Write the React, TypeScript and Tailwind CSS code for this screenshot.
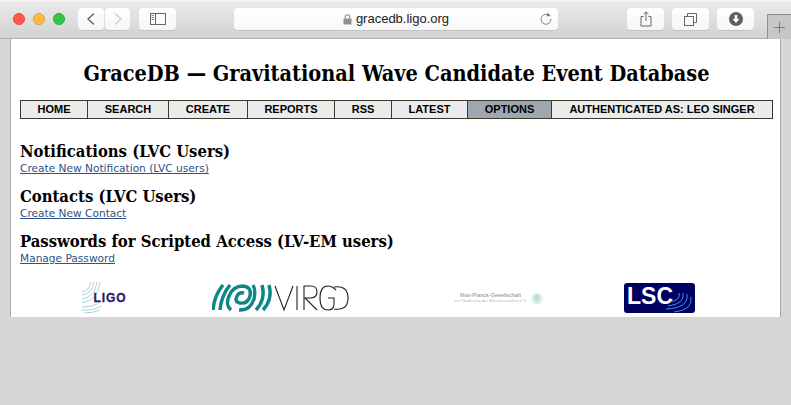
import React from "react";

const nav = [
  { t: "HOME", w: "w-[67px]" },
  { t: "SEARCH", w: "w-[81px]" },
  { t: "CREATE", w: "w-[79px]" },
  { t: "REPORTS", w: "w-[87px]" },
  { t: "RSS", w: "w-[57px]" },
  { t: "LATEST", w: "w-[76px]" },
  { t: "OPTIONS", w: "w-[84px]", active: true },
  { t: "AUTHENTICATED AS: LEO SINGER", w: "flex-1" },
];

const sections = [
  { h: "Notifications (LVC Users)", l: "Create New Notification (LVC users)" },
  { h: "Contacts (LVC Users)", l: "Create New Contact" },
  { h: "Passwords for Scripted Access (LV-EM users)", l: "Manage Password" },
];

function Btn({ w, children }: { w: string; children?: React.ReactNode }) {
  return (
    <div className={`${w} h-[22px] rounded-[4px] bg-gradient-to-b from-white to-[#f6f6f6] shadow-[0_1px_0_#c4c4c4] flex items-center justify-center`}>
      {children}
    </div>
  );
}

function Dot({ c, b }: { c: string; b: string }) {
  return <div className={`w-3 h-3 rounded-full ${c} border-[0.5px] ${b}`} />;
}

function LigoLogo() {
  return (
    <svg width="46" height="32" viewBox="0 0 46 32" className="block">
      <g fill="none" stroke="#9fd0d0" strokeWidth="0.9">
        <path d="M1 10 Q8 9 10 0" />
        <path d="M1 13 Q11 12 13 0" />
        <path d="M1 17 Q14 15 16 0" />
        <path d="M1 21 Q17 19 19 0" />
        <path d="M1 25 Q14 25 20 19" />
        <path d="M1 28 Q12 29 20 24" />
        <path d="M3 31 Q12 31 19 28" />
      </g>
      <text x="12.5" y="20" fontFamily="'Liberation Sans',sans-serif" fontWeight="700" fontSize="12" fill="#2c1a6b" textLength="32" stroke="#2c1a6b" strokeWidth="0.3">LIGO</text>
    </svg>
  );
}

function VirgoLogo() {
  return (
    <svg width="138" height="28" viewBox="0 0 138 28" className="block">
      <g fill="none" stroke="#0f8585" strokeWidth="3.4">
        <path d="M11 1 Q2 12 1 26" />
        <path d="M18 1 Q9 12 8 26" />
        <path d="M19 26 Q13 21 17 12 Q21 2 31 2 Q40 3 38 12 Q36 20 28 19 Q22 18 25 12 Q27 8 32 9" />
        <path d="M27 26 Q38 27 42 15 Q44 6 41 1" />
        <path d="M44 26 Q54 15 50 1" />
        <path d="M51 26 Q61 15 57 1" />
      </g>
      <g fill="none" stroke="#222" strokeWidth="1.1">
        <path d="M63 2 L72 26 L81 2" />
        <path d="M85 2 V26" />
        <path d="M92 26 V2 H99 Q105 2 105 8 Q105 14 98 14 H93 L105 26" />
        <path d="M124 6 Q120 2 116 2 Q108 2 108 14 Q108 26 116 26 Q122 26 122 20 V14 H116" />
        <path d="M122 3 Q136 1 136 14 Q136 27 122 25" />
      </g>
    </svg>
  );
}

function MpgLogo() {
  return (
    <div className="flex items-center gap-[3px] opacity-60">
      <div className="flex flex-col items-center font-['Liberation_Sans',sans-serif] leading-[5px] w-[75px] whitespace-nowrap">
        <span className="text-[5.5px] text-[#333]">Max-Planck-Gesellschaft</span>
        <span className="text-[4.2px] text-[#5a9a9a]">zur Förderung der Wissenschaften e.V.</span>
      </div>
      <svg width="12" height="13" viewBox="0 0 12 13" className="block">
        <circle cx="6" cy="6.5" r="5.5" fill="#c4e4e0" />
        <path d="M3 4 L7 2 L9 6 L6 10 L4 8 Z" fill="#8fc4c0" />
      </svg>
    </div>
  );
}

function LscLogo() {
  return (
    <div className="w-[71px] h-[30px] rounded-[3px] bg-[#000060] relative overflow-hidden">
      <span className="absolute left-[3px] top-[0px] text-[23px] leading-[26px] font-bold text-white font-['Liberation_Sans',sans-serif]">LSC</span>
      <svg width="71" height="30" viewBox="0 0 71 30" className="absolute left-0 top-0">
        <g fill="none" stroke="#3d8ee8" strokeWidth="1">
          <path d="M46 19 Q57 17 55 10" />
          <path d="M44 23 Q61 21 59 10" />
          <path d="M42 26 Q65 25 63 11" />
          <path d="M50 29 Q69 27 67 14" />
        </g>
      </svg>
    </div>
  );
}

export default function App() {
  return (
    <div className="w-[791px] h-[405px] bg-[#d6d6d6] relative overflow-hidden flex flex-col">
      <header className="h-[39px] shrink-0 bg-gradient-to-b from-[#ebebeb] to-[#d2d2d2] border-b border-[#b1b1b1] border-t border-t-[#f6f6f6] flex items-center pl-[13px] pb-[1px]">
        <div className="flex gap-2 mr-[13px]">
          <Dot c="bg-[#fc5753]" b="border-[#df4744]" />
          <Dot c="bg-[#fdbc40]" b="border-[#de9f34]" />
          <Dot c="bg-[#33c748]" b="border-[#27aa35]" />
        </div>
        <div className="flex gap-[1px] mr-[9px]">
          <Btn w="w-[26px]">
            <svg width="10" height="14" viewBox="0 0 10 14"><path d="M8 1.5 L2 7 L8 12.5" fill="none" stroke="#666" strokeWidth="1.4" /></svg>
          </Btn>
          <Btn w="w-[25px]">
            <svg width="10" height="14" viewBox="0 0 10 14"><path d="M2 1.5 L8 7 L2 12.5" fill="none" stroke="#cfcfcf" strokeWidth="1.4" /></svg>
          </Btn>
        </div>
        <Btn w="w-[37px]">
          <svg width="16" height="12" viewBox="0 0 16 12">
            <rect x="0.5" y="0.5" width="15" height="11" fill="none" stroke="#666" />
            <path d="M5.5 0.5 V11.5" stroke="#666" />
            <path d="M1.5 2.5 H4 M1.5 4.5 H4 M1.5 6.5 H4" stroke="#888" />
          </svg>
        </Btn>
        <div className="ml-[58px] w-[324px] h-[22px] rounded-[4px] bg-gradient-to-b from-white to-[#f8f8f8] shadow-[0_1px_0_#c4c4c4] relative flex items-center justify-center">
          <svg width="9" height="11" viewBox="0 0 9 11" className="mr-[4px]">
            <rect x="0.5" y="4.5" width="8" height="6" rx="0.5" fill="#8f8f8f" />
            <path d="M2.2 4.5 V3 A2.3 2.3 0 0 1 6.8 3 V4.5" fill="none" stroke="#8f8f8f" strokeWidth="1.1" />
          </svg>
          <span className="text-[13px] text-[#222] font-['Liberation_Sans',sans-serif]">gracedb.ligo.org</span>
          <svg width="12" height="13" viewBox="0 0 12 13" className="absolute right-[6px] top-[4px]">
            <path d="M9.8 4 A5 5 0 1 0 11 7" fill="none" stroke="#777" strokeWidth="0.9" />
            <path d="M7.5 0.5 L10.5 3.8 L6.8 4.6 Z" fill="#777" />
          </svg>
        </div>
        <div className="ml-[69px] flex gap-[8px]">
          <Btn w="w-[37px]">
            <svg width="12" height="16" viewBox="0 0 12 16">
              <path d="M3.5 5.5 H1 V15 H11 V5.5 H8.5" fill="none" stroke="#666" />
              <path d="M6 10 V1 M3.5 3.3 L6 0.8 L8.5 3.3" fill="none" stroke="#666" />
            </svg>
          </Btn>
          <Btn w="w-[37px]">
            <svg width="13" height="13" viewBox="0 0 13 13">
              <rect x="0.5" y="3.5" width="9" height="9" fill="none" stroke="#666" />
              <path d="M3.5 3.5 V0.5 H12.5 V9.5 H9.5" fill="none" stroke="#666" />
            </svg>
          </Btn>
          <Btn w="w-[37px]">
            <svg width="14" height="14" viewBox="0 0 14 14">
              <circle cx="7" cy="7" r="7" fill="#5e5e5e" />
              <path d="M5.7 3 H8.3 V7 H10.5 L7 11 L3.5 7 H5.7 Z" fill="#fff" />
            </svg>
          </Btn>
        </div>
      </header>

      <div className="absolute right-0 top-[14px] w-[24px] h-[25px] border-l border-t border-[#8f8f8f] bg-[#c6c6c6] flex items-center justify-center">
        <svg width="11" height="11" viewBox="0 0 11 11"><path d="M5.5 0 V11 M0 5.5 H11" stroke="#7d7d7d" /></svg>
      </div>

      <main className="ml-[10px] w-[771px] h-[278px] shrink-0 bg-white border-x border-[#a8a8a8] pl-[9px] pr-[7px] pt-[22px] overflow-hidden">
        <h1 className="text-center text-[21.5px] leading-[26px] font-bold text-black font-['DejaVu_Serif_Condensed','DejaVu_Serif',serif] mb-[13px] whitespace-nowrap">
          GraceDB — Gravitational Wave Candidate Event Database
        </h1>
        <nav className="flex h-[19px] border border-[#3a3a2c] bg-[#ebebeb]">
          {nav.map((n, i) => (
            <div
              key={n.t}
              className={`${n.w} ${n.active ? "bg-[#9ea6b0]" : ""} ${i < nav.length - 1 ? "border-r border-[#3a3a2c]" : ""} flex items-center justify-center text-[11px] font-bold text-black font-['Liberation_Sans',sans-serif] whitespace-nowrap`}
            >
              {n.t}
            </div>
          ))}
        </nav>
        <div className="mt-[23px] flex flex-col gap-[12px]">
          {sections.map((s) => (
            <section key={s.h}>
              <h2 className="text-[16.5px] leading-[20px] font-bold text-black font-['DejaVu_Serif_Condensed','DejaVu_Serif',serif] whitespace-nowrap">{s.h}</h2>
              <a href="#" className="block w-fit text-[10.6px] leading-[13px] text-[#2c5286] underline font-['DejaVu_Sans',sans-serif]">{s.l}</a>
            </section>
          ))}
        </div>
        <div className="mt-[17px] flex items-center">
          <div className="ml-[61px]"><LigoLogo /></div>
          <div className="ml-[85px]"><VirgoLogo /></div>
          <div className="ml-[103px]"><MpgLogo /></div>
          <div className="ml-[81px]"><LscLogo /></div>
        </div>
      </main>
    </div>
  );
}
